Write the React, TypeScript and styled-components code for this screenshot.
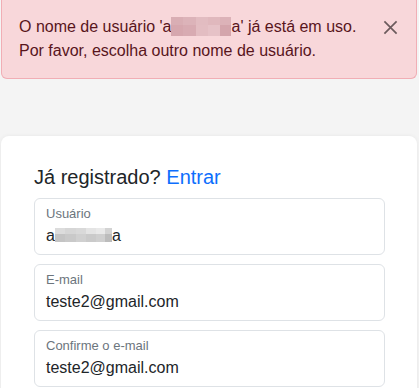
import React from "react";
import styled, { createGlobalStyle } from "styled-components";

const Global = createGlobalStyle`
  html, body { margin: 0; padding: 0; background: #f4f4f4; }
  body { font-family: "Liberation Sans", Arial, sans-serif; color: #212529; }
`;

const Page = styled.div`
  display: flex;
  flex-direction: column;
  padding: 0 2px 0 1px;
  gap: 57px;
`;

const Alert = styled.div`
  display: flex;
  align-items: flex-start;
  justify-content: space-between;
  background: #f8d7da;
  border: 1px solid #f1aeb5;
  border-top: none;
  border-radius: 0 0 6px 6px;
  padding: 15px 17px 15px 17px;
  color: #58151c;
  font-size: 16px;
  line-height: 24px;
`;

const AlertText = styled.div`
  display: flex;
  flex-direction: column;
`;

const CloseButton = styled.button`
  border: none;
  background: transparent;
  padding: 0;
  margin: 4px 1px 0 0;
  width: 16px;
  height: 16px;
  display: flex;
  align-items: center;
  justify-content: center;
  cursor: pointer;
`;

const MaskWrap = styled.span`
  display: inline-flex;
  flex-direction: column;
  vertical-align: middle;
  margin-top: -3px;
`;

const MaskRow = styled.span<{ $h: number }>`
  display: flex;
  height: ${(p) => p.$h}px;
`;

const MaskCell = styled.span`
  display: block;
  height: 100%;
`;

const Card = styled.div`
  background: #ffffff;
  border-radius: 8px;
  box-shadow: 0 0 4px rgba(0, 0, 0, 0.06);
  padding: 29px 32px 0 33px;
  display: flex;
  flex-direction: column;
  gap: 9px;
  height: 260px;
`;

const Heading = styled.h2`
  margin: 0;
  font-weight: 400;
  font-size: 20px;
  line-height: 24px;
  color: #212529;
`;

const Link = styled.a`
  color: #0d6efd;
  text-decoration: none;
`;

const Field = styled.div`
  box-sizing: border-box;
  flex: none;
  height: 57px;
  border: 1px solid #dee2e6;
  border-radius: 6px;
  padding: 7px 11px 0 11px;
  display: flex;
  flex-direction: column;
`;

const Label = styled.span`
  font-size: 13px;
  line-height: 16px;
  color: #6c757d;
  margin-bottom: 4px;
`;

const Value = styled.span`
  font-size: 16px;
  line-height: 20px;
  color: #212529;
  display: flex;
  align-items: center;
`;

type Cell = [number, string];

function Mask({ rows }: { rows: { h: number; cells: Cell[] }[] }) {
  return (
    <MaskWrap>
      {rows.map((r, i) => (
        <MaskRow key={i} $h={r.h}>
          {r.cells.map(([w, c], j) => (
            <MaskCell key={j} style={{ width: w, background: c }} />
          ))}
        </MaskRow>
      ))}
    </MaskWrap>
  );
}

const alertMask = [
  { h: 8, cells: [[12, "#d9aeb4"], [13, "#dcb3b9"], [12, "#e2bcc1"], [12, "#e0b8bd"], [11, "#dcb2b8"]] as Cell[] },
  { h: 11, cells: [[12, "#d6a7ae"], [13, "#d8abb2"], [12, "#e3bdc2"], [12, "#e6c2c7"], [11, "#d4a5ac"]] as Cell[] },
];

const userMask = [
  { h: 6, cells: [[10, "#dcdcdc"], [11, "#d6d6d6"], [10, "#d9d9d9"], [10, "#e4e4e4"], [9, "#e9e9e9"], [7, "#d3d3d3"]] as Cell[] },
  { h: 8, cells: [[10, "#c4c4c4"], [11, "#c9c9c9"], [10, "#d0d0d0"], [10, "#cacaca"], [9, "#cfcfcf"], [7, "#bcbcbc"]] as Cell[] },
];

export default function App() {
  return (
    <>
      <Global />
      <Page>
        <Alert>
          <AlertText>
            <span>
              O nome de usuário 'a
              <Mask rows={alertMask} />
              a' já está em uso.
            </span>
            <span>Por favor, escolha outro nome de usuário.</span>
          </AlertText>
          <CloseButton aria-label="Fechar">
            <svg width="15" height="15" viewBox="0 0 16 16">
              <path d="M1.5 1.5 L14.5 14.5 M14.5 1.5 L1.5 14.5" stroke="#6b5a5c" strokeWidth="1.8" fill="none" />
            </svg>
          </CloseButton>
        </Alert>
        <Card>
          <Heading>
            Já registrado? <Link href="#">Entrar</Link>
          </Heading>
          <Field>
            <Label>Usuário</Label>
            <Value>
              a
              <Mask rows={userMask} />
              a
            </Value>
          </Field>
          <Field>
            <Label>E-mail</Label>
            <Value>teste2@gmail.com</Value>
          </Field>
          <Field>
            <Label>Confirme o e-mail</Label>
            <Value>teste2@gmail.com</Value>
          </Field>
        </Card>
      </Page>
    </>
  );
}
